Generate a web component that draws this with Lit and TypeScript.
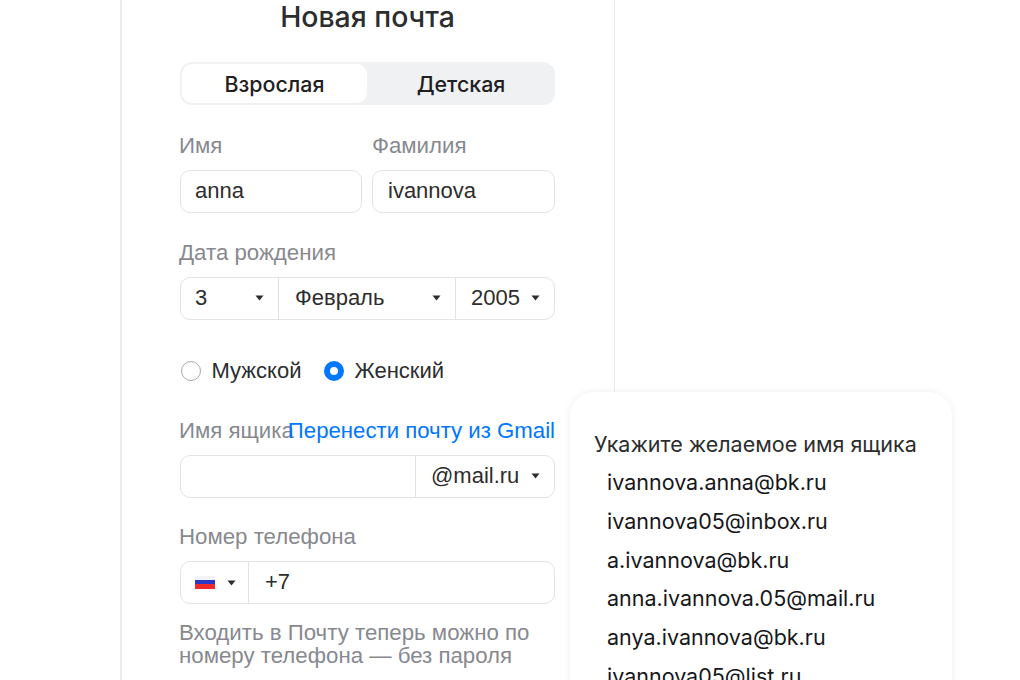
import { LitElement, html, css } from "lit";
import { customElement } from "lit/decorators.js";

const caret = html`<svg class="caret" width="9" height="6" viewBox="0 0 9 6"><path d="M0.5 0.5H8.5L4.5 5.5Z" fill="#2c2d2e"/></svg>`;

@customElement("app-root")
export class AppRoot extends LitElement {
  static styles = css`
    :host { display: block; position: relative; width: 1020px; height: 680px; overflow: hidden; background: #fff; font-family: "Liberation Sans", Arial, sans-serif; color: #2c2d2e; }
    .card { box-sizing: border-box; width: 495px; height: 680px; margin-left: 120px; border-left: 2px solid #ececee; border-right: 1px solid #ececee; padding: 0 59px 0 58px; display: flex; flex-direction: column; }
    h1 { margin: 0; height: 32px; font: 500 28.4px/34px Inter, sans-serif; text-align: center; color: #2c2d2e; }
    .seg { margin-top: 30px; height: 43px; flex: none; display: flex; border-radius: 12px; background: #f0f1f3; font: 500 21.4px/45px Inter, sans-serif; color: #1f2022; }
    .seg div { flex: 1; text-align: center; }
    .seg .on { flex: none; width: 185px; margin: 2px 0 2px 2px; line-height: 41px; background: #fff; border-radius: 10px; }
    .two { display: grid; grid-template-columns: 182px 183px; gap: 10px; margin-top: 29px; }
    .two > div:last-child .label { margin-left: 0; }
    .two > div:last-child .text { padding-left: 15px; }
    .label { display: block; height: 24px; margin-left: -1px; font-size: 22.25px; line-height: 24px; color: #87898f; white-space: nowrap; }
    .field { box-sizing: border-box; display: flex; align-items: center; height: 43px; margin-top: 12px; border: 1px solid #e2e3e6; border-radius: 10px; background: #fff; font-size: 22px; color: #2c2d2e; }
    .text { padding: 0 0 2px 14px; }
    .block { margin-top: 28px; }
    .phone { margin-top: 27px; }
    .cell { box-sizing: border-box; height: 100%; display: flex; align-items: center; justify-content: space-between; padding: 0 14px 2px 15px; border-left: 1px solid #e2e3e6; }
    .cell:first-child { border-left: 0; }
    .d { width: 97px; padding-left: 14px; } .m { width: 177px; padding-left: 16px; } .y { flex: 1; }
    .code { padding-left: 16px; }
    .radios { display: flex; align-items: center; gap: 21.5px; margin-top: 38px; height: 26px; font-size: 22px; }
    .radio { display: flex; align-items: center; gap: 10.5px; }
    .dot { box-sizing: border-box; width: 20px; height: 20px; border-radius: 50%; border: 1px solid #a9abb0; margin-left: 1px; }
    .dot.sel { border: 6.5px solid #0077ff; }
    .mailhead { display: flex; justify-content: space-between; margin-top: 35px; height: 24px; }
    .mailhead .label { flex: 0 0 100px; min-width: 0; }
    .link { font-size: 22.2px; line-height: 24px; color: #0077ff; white-space: nowrap; }
    .mailbox { flex: 1; height: 100%; }
    .domain { width: 139px; flex: none; }
    .flag { display: block; width: 20px; height: 13px; background: linear-gradient(#f4f4f8 0 33%, #2a38c8 33% 60%, #ee2a2a 60%); }
    .country { width: 67px; flex: none; padding: 0 12px 0 14px; }
    .help { margin: 17px 0 0 -1px; font-size: 22.25px; line-height: 23px; color: #87898f; white-space: nowrap; }
    .pop { position: absolute; left: 570px; top: 392px; width: 382px; height: 330px; box-sizing: border-box; padding: 40px 24px 0; background: #fff; border-radius: 24px; box-shadow: 0 0 8px rgba(0,16,61,.07); font: 400 21.5px/24px Inter, sans-serif; color: #2c2d2e; }
    .pop ul { list-style: none; margin: 7px 0 0; padding: 0 0 0 13px; color: #16171a; }
    .pop li { height: 38.75px; line-height: 38.75px; white-space: nowrap; }
  `;

  render() {
    const emails = ["ivannova.anna@bk.ru", "ivannova05@inbox.ru", "a.ivannova@bk.ru", "anna.ivannova.05@mail.ru", "anya.ivannova@bk.ru", "ivannova05@list.ru"];
    return html`
      <div class="card">
        <h1>Новая почта</h1>
        <div class="seg"><div class="on">Взрослая</div><div>Детская</div></div>
        <div class="two">
          <div><span class="label">Имя</span><div class="field text">anna</div></div>
          <div><span class="label">Фамилия</span><div class="field text">ivannova</div></div>
        </div>
        <div class="block">
          <span class="label">Дата рождения</span>
          <div class="field">
            <div class="cell d">3 ${caret}</div>
            <div class="cell m">Февраль ${caret}</div>
            <div class="cell y">2005 ${caret}</div>
          </div>
        </div>
        <div class="radios">
          <label class="radio"><span class="dot"></span>Мужской</label>
          <label class="radio"><span class="dot sel"></span>Женский</label>
        </div>
        <div class="mailhead"><span class="label">Имя ящика</span><span class="link">Перенести почту из Gmail</span></div>
        <div class="field">
          <div class="mailbox"></div>
          <div class="cell domain">@mail.ru ${caret}</div>
        </div>
        <div class="phone">
          <span class="label">Номер телефона</span>
          <div class="field">
            <div class="cell country"><span class="flag"></span>${caret}</div>
            <div class="cell code">+7</div>
          </div>
        </div>
        <p class="help">Входить в Почту теперь можно по<br />номеру телефона — без пароля</p>
      </div>
      <div class="pop">
        Укажите желаемое имя ящика
        <ul>${emails.map((e) => html`<li>${e}</li>`)}</ul>
      </div>
    `;
  }
}
